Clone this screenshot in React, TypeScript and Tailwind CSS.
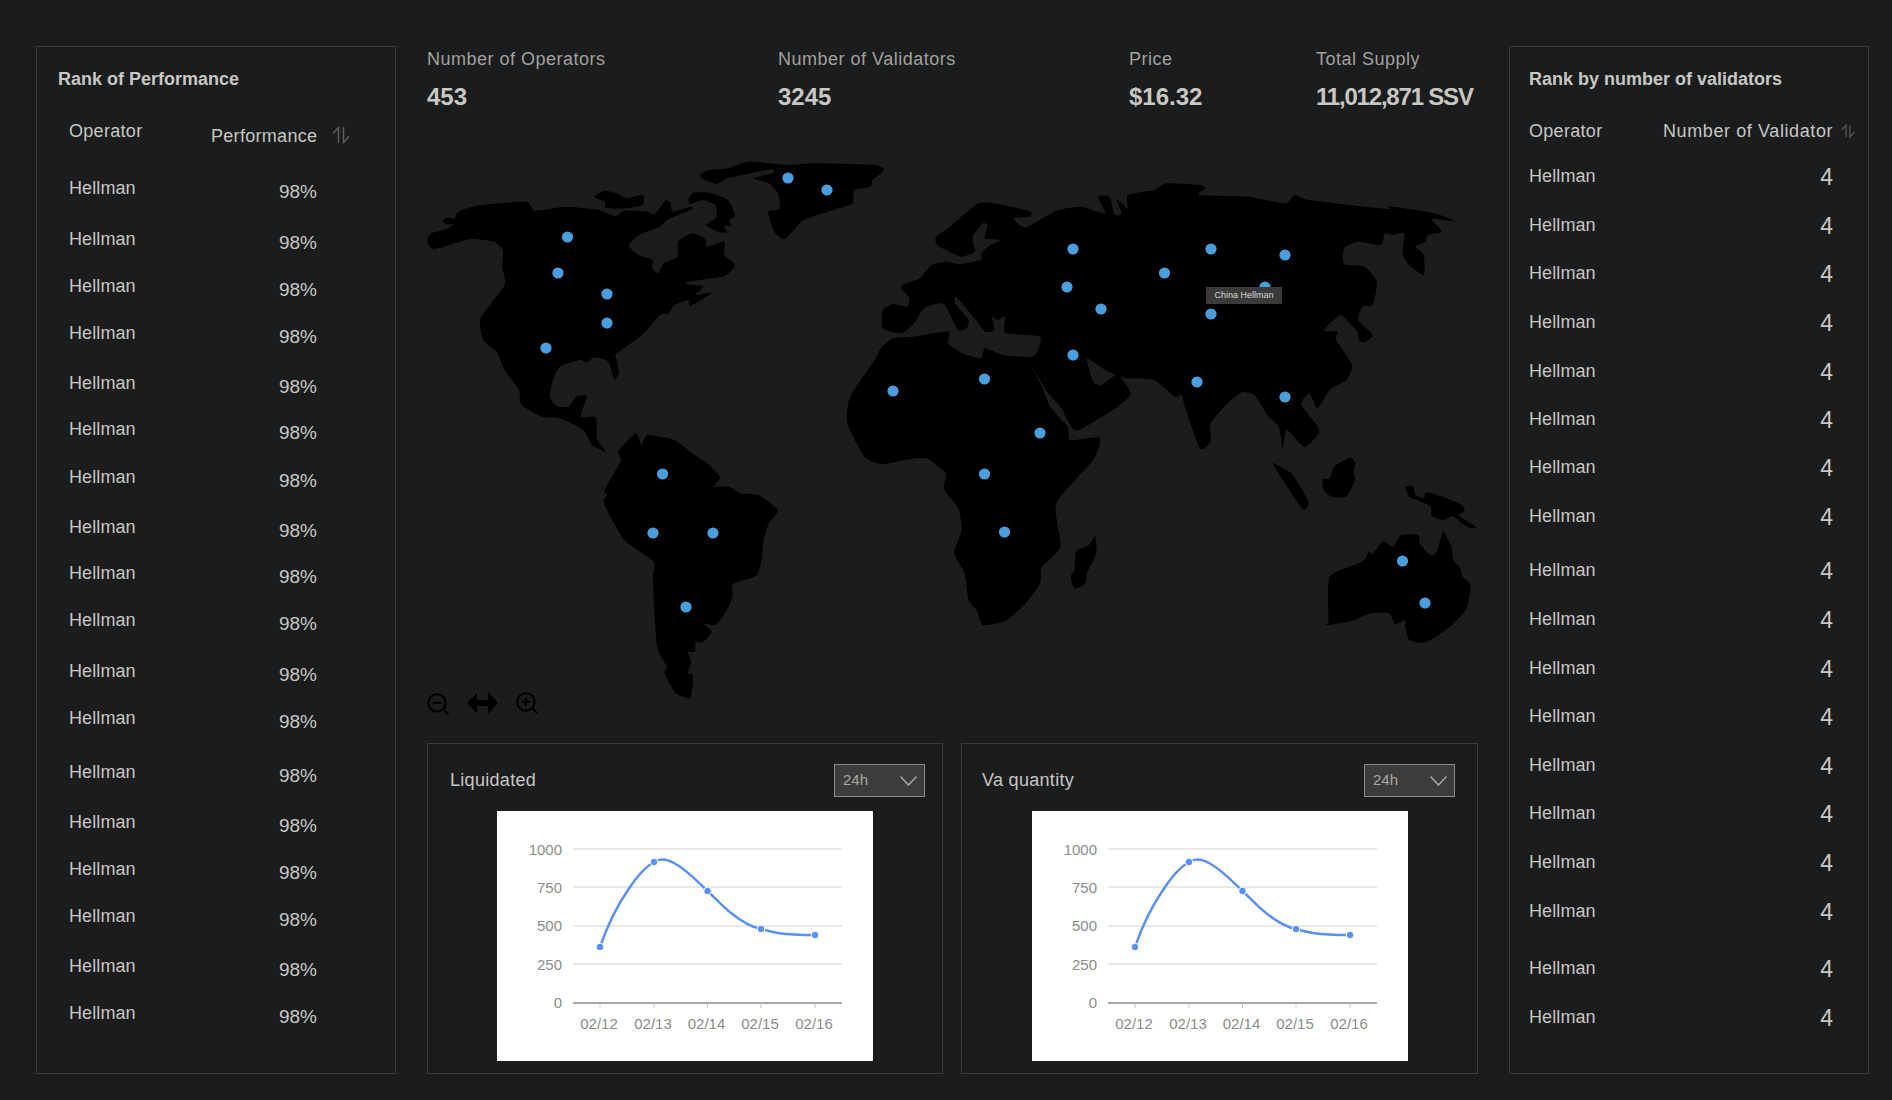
import {FC, PropsWithChildren} from 'react';
import {ZoomIn, ZoomOut} from 'lucide-react';

const FONT = "font-['Liberation_Sans',Arial,sans-serif]";

// row heights follow the uneven spacing of the two lists
const leftRows = [51, 47, 47, 50, 46, 48, 50, 46, 47, 51, 47, 54, 50, 47, 47, 50, 47, 47];
const rightRows = [49, 48, 49, 49, 48, 48, 49, 54, 49, 49, 48, 49, 48, 49, 49, 57, 49, 49];

const stats = [
  {label: 'Number of Operators', value: '453', width: 'w-[351px]', value_class: ''},
  {label: 'Number of Validators', value: '3245', width: 'w-[351px]', value_class: ''},
  {label: 'Price', value: '$16.32', width: 'w-[187px]', value_class: ''},
  {label: 'Total Supply', value: '11,012,871 SSV', width: 'flex-1', value_class: 'tracking-[-1.2px]'},
];

const Z3 = 'translate(410 140) scale(0.35714 0.33333)';
const Z4 = 'translate(840 140) scale(0.40816 0.33333)';
const Z5 = 'translate(410 440) scale(0.35714 0.33333)';
const Z6 = 'translate(840 430) scale(0.40816 0.33333)';

const land: [string, string][] = [
  // north america
  [Z3, '50,295 60,280 100,268 120,255 135,215 200,195 325,185 350,212 430,200 520,208 575,228 600,212 665,215 685,222 715,182 730,190 735,215 785,200 790,208 720,240 700,260 640,285 613,318 640,345 680,360 678,385 695,400 710,370 750,350 750,305 790,280 825,295 832,320 880,305 880,345 910,375 880,408 780,425 775,432 820,440 800,465 845,458 785,498 780,480 740,495 725,520 700,525 650,585 585,635 575,645 585,695 572,718 555,665 515,652 495,668 475,660 420,680 400,720 392,770 410,798 445,800 465,770 495,768 478,830 520,832 525,900 548,935 510,915 485,870 420,835 370,830 312,795 305,750 265,690 245,640 232,625 205,600 198,535 265,435 258,380 260,330 235,305 175,297 140,305 68,327 50,310'],
  [Z3, '92,240 105,233 135,240 120,252 100,252'],
  [Z3, '515,170 545,152 580,160 605,175 652,165 652,195 610,205 550,205 545,185'],
  [Z3, '780,175 795,158 840,158 890,180 910,225 895,240 900,258 880,258 888,278 860,275 830,255 858,232 855,195 820,180 785,192'],
  // greenland
  [Z3, '812,105 830,92 890,85 950,65 1060,75 1130,70 1300,75 1327,90 1295,120 1290,140 1245,150 1240,190 1215,200 1140,225 1095,245 1050,297 1020,275 1003,215 1035,208 1030,160 1005,130 960,115 1015,100 1010,88 890,115 860,132 820,118'],
  // south america
  [Z5, '583,35 632,-20 648,15 665,-15 740,0 790,40 830,68 868,110 852,140 895,140 925,160 975,165 1030,210 1005,250 990,300 985,360 968,408 905,432 903,470 885,515 855,555 820,550 845,575 820,607 800,605 798,635 778,635 787,665 778,700 792,705 785,773 745,760 712,698 720,680 692,620 680,420 682,365 600,300 543,190 552,165 545,150 590,62'],
  // europe, asia and africa
  [Z4, '105,510 130,492 165,500 170,475 150,445 158,432 195,415 225,375 260,365 295,372 345,360 347,340 365,318 392,300 355,295 362,258 350,250 325,290 330,335 300,350 285,345 238,315 235,290 265,265 340,190 400,195 465,215 465,230 425,235 455,262 530,212 590,200 630,215 650,218 632,170 660,170 672,222 690,222 678,178 705,205 705,165 770,150 800,130 880,135 895,145 880,165 1000,170 1090,190 1115,165 1150,180 1340,207 1345,198 1455,220 1510,245 1450,237 1475,275 1440,285 1435,305 1410,320 1430,345 1430,405 1395,375 1378,340 1383,280 1355,285 1335,280 1325,315 1270,305 1235,325 1235,372 1285,380 1315,425 1305,495 1280,500 1270,540 1305,585 1285,607 1270,600 1268,575 1245,545 1225,525 1185,572 1220,575 1215,600 1255,675 1240,720 1200,750 1170,805 1150,760 1130,795 1175,870 1138,920 1095,870 1085,925 1075,860 1050,830 1015,765 985,757 950,790 908,850 908,905 882,925 845,800 838,765 820,770 770,720 700,715 650,690 605,655 620,725 640,735 680,705 712,760 680,800 590,868 570,865 540,800 510,760 466,672 495,740 515,800 558,860 565,900 637,893 620,960 530,1090 540,1220 495,1280 490,1330 455,1390 405,1442 350,1455 335,1410 315,1380 305,1300 280,1240 298,1170 290,1105 255,1048 260,1000 235,975 215,955 185,955 130,967 100,973 60,950 18,850 25,770 85,660 100,625 130,595 180,590 265,575 265,610 300,640 345,655 355,625 400,645 475,648 490,590 405,578 405,530 385,540 372,530 378,570 355,575 330,535 285,472 282,490 315,540 310,565 290,570 260,500 245,490 205,505 185,545 150,580 105,565'],
  // madagascar, sumatra, borneo, new guinea, australia
  [Z6, '625,320 628,370 605,430 600,462 575,475 565,440 575,420 578,365 610,345'],
  [Z6, '1060,100 1085,115 1110,135 1148,215 1140,237 1130,232 1095,170'],
  [Z6, '1250,83 1263,100 1258,125 1262,150 1240,200 1205,200 1185,180 1182,148 1200,145 1210,110'],
  [Z6, '1385,170 1405,170 1410,195 1430,205 1440,187 1520,222 1530,245 1515,255 1560,293 1535,290 1500,258 1480,270 1450,258 1447,230 1415,210 1395,200'],
  [Z6, '1200,440 1280,395 1295,365 1305,372 1330,335 1355,350 1375,315 1418,315 1420,340 1445,375 1462,365 1478,305 1498,350 1503,390 1520,415 1525,440 1545,465 1535,535 1495,590 1435,637 1395,630 1385,590 1385,570 1360,582 1345,550 1300,550 1255,572 1195,585 1190,578 1197,575'],
];

const pins = [
  [567.5, 237], [558, 273], [607, 294], [607, 323], [546, 348], [788, 178], [827, 190], [662.5, 474],
  [653, 533], [713, 533], [893, 391], [686, 607], [1073, 249], [1211, 249], [1285, 255], [1164.5, 273],
  [1067, 287], [1265, 287], [1101, 309], [1211, 314], [1073, 355], [984.5, 379], [1197, 382], [1285, 397],
  [1040, 433], [984.5, 474], [1004.5, 532], [1402.5, 561], [1425, 603],
];

// closed curve through the traced outline points
const smooth = (points: string) => {
  const p = points.split(' ').map(s => s.split(',').map(Number));
  const n = p.length;
  let d = `M${p[0][0]} ${p[0][1]}`;
  for (let i = 0; i < n; i++) {
    const a = p[(i - 1 + n) % n];
    const b = p[i];
    const c = p[(i + 1) % n];
    const e = p[(i + 2) % n];
    const k = 0.1;
    d += `C${b[0] + (c[0] - a[0]) * k} ${b[1] + (c[1] - a[1]) * k} ${c[0] - (e[0] - b[0]) * k} ${c[1] - (e[1] - b[1]) * k} ${c[0]} ${c[1]}`;
  }
  return d + 'Z';
};

const SortIcon: FC<{className: string}> = ({className}) => (
  <svg className={className} viewBox="0 0 18 18" fill="none" stroke="#5f6062" strokeWidth="1.4">
    <path d="M6.5 17V1.5L1 7.5" />
    <path d="M11.5 1V16.5L17 10.5" />
  </svg>
);

const RankPanel: FC<PropsWithChildren> = ({children}) => (
  <div className="w-[360px] h-[1028px] border border-[#3a3b3d] flex flex-col pt-[22px]">{children}</div>
);

const WorldMap = () => (
  <div className="relative flex-1">
    <svg className="w-full h-full" viewBox="427 126 1051 617">
      {land.map(([transform, points], i) => (
        <path key={i} transform={transform} d={smooth(points)} fill="#000000" />
      ))}
      {/* baja sliver */}
      <path d="M497 355C501 358 503 370 503 382C499 375 495 365 497 355Z" fill="#1a1c1e" />
      {pins.map(([x, y], i) => (
        <circle key={i} cx={x} cy={y} r="5.6" fill="#4a9edb" />
      ))}
    </svg>
    <div className="absolute left-[-2px] top-[565px] flex items-start gap-4 text-black">
      <ZoomOut size={26} strokeWidth={2} />
      <svg className="w-[31px] h-[22px] mt-[1px]" viewBox="0 0 31 22" fill="#000000">
        <path d="M0 11L10 1V8H21V0L31 11L21 22V14H10V21Z" />
      </svg>
      <ZoomIn size={26} strokeWidth={2} className="-mt-[1px]" />
    </div>
    <div className="absolute left-[779px] top-[161px] w-[76px] h-[17px] bg-[#3a3a3a] text-[#d8d8d6] text-[9px] flex items-center justify-center">
      China Hellman
    </div>
  </div>
);

const ticks = ['02/12', '02/13', '02/14', '02/15', '02/16'];
const tickX = [103, 157, 210.5, 264, 318];
const gridY = [38, 76, 115, 153];
const dots = [[103, 136], [157, 51], [210.5, 80], [264, 118], [318, 124]];
const yLabels = ['1000', '750', '500', '250', '0'];

const LineChart = () => (
  <div className="w-[376px] h-[250px] bg-white mx-auto shrink-0">
    <svg className="w-full h-full" viewBox="0 0 376 250" fill="none">
      {gridY.map(y => (
        <line key={y} x1="76" x2="345" y1={y} y2={y} stroke="#e2e2e2" strokeWidth="1.5" />
      ))}
      <line x1="76" x2="345" y1="192" y2="192" stroke="#8a8a8a" strokeWidth="1.5" />
      {tickX.map(x => (
        <line key={x} x1={x} x2={x} y1="192" y2="197" stroke="#c8c8c8" />
      ))}
      {yLabels.map((label, i) => (
        <text key={label} x="65" y={[44, 82, 120, 159, 197][i]} textAnchor="end" fontSize="15" fill="#8c8c8c" fontFamily="Liberation Sans">
          {label}
        </text>
      ))}
      {ticks.map((label, i) => (
        <text key={label} x={tickX[i] - 1} y="218" textAnchor="middle" fontSize="15" fill="#8c8c8c" fontFamily="Liberation Sans">
          {label}
        </text>
      ))}
      <path
        d="M103 136C112 110 122 92 131 79C140 65 148 56 157 51C163 47 170 48 177 52C190 59 200 70 210.5 80C218 87 226 96 234 102C244 110 254 116 264 118C274 121 283 124 318 124"
        stroke="#5b8ff9"
        strokeWidth="2.5"
      />
      {dots.map(([x, y]) => (
        <circle key={x} cx={x} cy={y} r="3.8" fill="#5b8ff9" stroke="#ffffff" strokeWidth="1" />
      ))}
    </svg>
  </div>
);

const ChartPanel: FC<{title: string; pad: string; size: string}> = ({title, pad, size}) => (
  <div className={`${size} border border-[#3a3b3d] flex flex-col`}>
    <div className={`flex items-center justify-between h-[67px] pt-[6px] ${pad}`}>
      <span className="text-[18px] tracking-[0.3px] text-[#c9c7c1]">{title}</span>
      <div className="w-[91px] h-[33px] bg-[#3c3c3c] border border-[#8a8a86] flex items-center justify-between pl-[8px] pr-[7px]">
        <span className="text-[15px] text-[#aaa8a2]">24h</span>
        <svg className="w-[17px] h-[10px]" viewBox="0 0 17 10" fill="none" stroke="#aaa8a2" strokeWidth="1.5">
          <path d="M0.5 0.5L8.5 9L16.5 0.5" />
        </svg>
      </div>
    </div>
    <LineChart />
  </div>
);

export default function App() {
  return (
    <div className={`${FONT} w-full h-[1100px] bg-[#1a1c1e] flex gap-[31px] pl-[36px] pt-[46px] text-[#c9c7c1] overflow-hidden`}>
      <RankPanel>
        <div className="pl-[21px] text-[18px] font-bold leading-[20px]">Rank of Performance</div>
        <div className="h-[88px] relative shrink-0">
          <span className="absolute left-[32px] top-[31px] text-[18px] tracking-[0.3px] leading-[22px]">Operator</span>
          <span className="absolute left-[174px] top-[36px] text-[18px] tracking-[0.3px] leading-[22px]">Performance</span>
          <SortIcon className="absolute left-[295px] top-[37px] w-[18px] h-[18px]" />
        </div>
        <div className="flex flex-col">
          {leftRows.map((h, i) => (
            <div key={i} className="flex pl-[32px] pr-[78px] items-start justify-between" style={{height: h}}>
              <span className="text-[18px] tracking-[0.1px] leading-[22px]">Hellman</span>
              <span className="text-[19px] leading-[22px] mt-[4px]">98%</span>
            </div>
          ))}
        </div>
      </RankPanel>

      <div className="w-[1051px] h-[1028px] flex flex-col">
        <div className="flex h-[80px] shrink-0">
          {stats.map(s => (
            <div key={s.label} className={s.width}>
              <div className="text-[18px] tracking-[0.5px] text-[#a3a19c] leading-[24px] mt-[1px]">{s.label}</div>
              <div className={`text-[24px] font-bold mt-[11px] leading-[30px] whitespace-nowrap ${s.value_class}`}>{s.value}</div>
            </div>
          ))}
        </div>
        <WorldMap />
        <div className="flex gap-[18px] h-[331px] shrink-0">
          <ChartPanel title="Liquidated" pad="pl-[22px] pr-[17px]" size="w-[516px]" />
          <ChartPanel title="Va quantity" pad="pl-[20px] pr-[22px]" size="flex-1" />
        </div>
      </div>

      <RankPanel>
        <div className="pl-[19px] text-[18px] font-bold leading-[20px]">Rank by number of validators</div>
        <div className="h-[76px] relative shrink-0">
          <span className="absolute left-[19px] top-[31px] text-[18px] tracking-[0.3px] leading-[22px]">Operator</span>
          <span className="absolute left-[153px] top-[31px] text-[18px] tracking-[0.6px] leading-[22px]">Number of Validator</span>
          <SortIcon className="absolute left-[331px] top-[35px] w-[14px] h-[14px]" />
        </div>
        <div className="flex flex-col">
          {rightRows.map((h, i) => (
            <div key={i} className="flex pl-[19px] pr-[35px] items-start justify-between" style={{height: h}}>
              <span className="text-[18px] tracking-[0.1px] leading-[22px]">Hellman</span>
              <span className="text-[23px] leading-[22px] mt-[1px]">4</span>
            </div>
          ))}
        </div>
      </RankPanel>
    </div>
  );
}
